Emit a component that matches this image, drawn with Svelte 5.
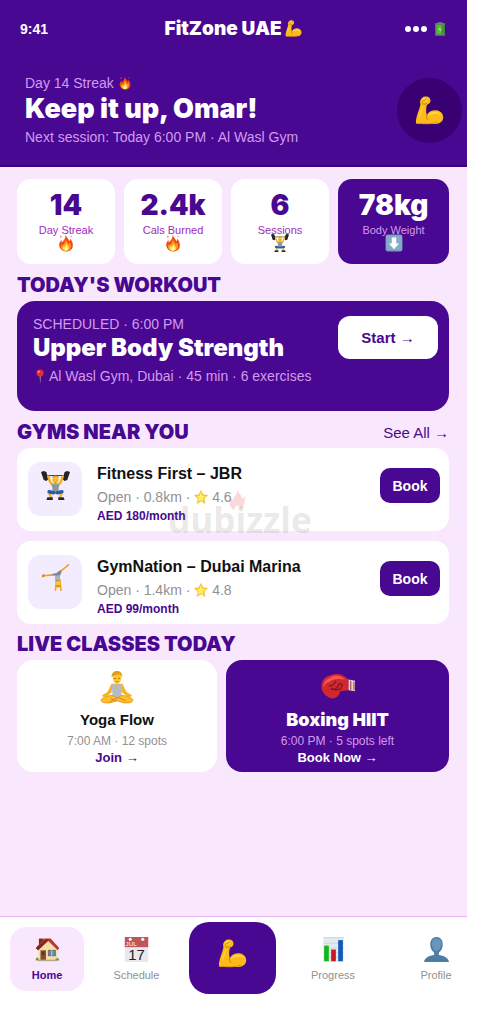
<script lang="ts">
    type Stat = { value: string; label: string; icon: string; dark?: boolean };

    const stats: Stat[] = [
        { value: '14', label: 'Day Streak', icon: 'fire' },
        { value: '2.4k', label: 'Cals Burned', icon: 'fire' },
        { value: '6', label: 'Sessions', icon: 'lifter' },
        { value: '78kg', label: 'Body Weight', icon: 'down', dark: true }
    ];

    const gyms = [
        { name: 'Fitness First – JBR', distance: '0.8km', rating: '4.6', price: 'AED 180/month', icon: 'lifter' },
        { name: 'GymNation – Dubai Marina', distance: '1.4km', rating: '4.8', price: 'AED 99/month', icon: 'cartwheel' }
    ];

    const classes = [
        { name: 'Yoga Flow', info: '7:00 AM · 12 spots', action: 'Join →', icon: 'yoga', dark: false },
        { name: 'Boxing HIIT', info: '6:00 PM · 5 spots left', action: 'Book Now →', icon: 'glove', dark: true }
    ];

    const tabs = [
        { label: 'Home', icon: 'house' },
        { label: 'Schedule', icon: 'calendar' },
        { label: '', icon: 'arm' },
        { label: 'Progress', icon: 'chart' },
        { label: 'Profile', icon: 'person' }
    ];

    let active = $state('Home');
</script>

{#snippet icon(name: string)}
    <svg class="icon" viewBox="0 0 32 32" aria-hidden="true">
        {#if name === 'arm'}
            <path fill="#fcba1b" d="M8 2c2-2 6-2 8 0 1 2 2 4 0 6l-3 2c-1 4-1 8 0 11 3-5 8-6 12-5 4 1 7 5 6 9-1 4-5 6-10 6H3c-2 0-2-2-2-4 1-7 4-12 5-18-1-3 0-5 2-7z" />
            <path fill="#ffd643" d="M9 2c3-1 5 0 5 2s-3 2-5 2-1-3 0-4zM14 22c3-6 12-6 15-1-5-2-10-2-15 1zM8 11c-1 5-3 9-4 14 3-4 4-9 5-14z" />
            <path fill="none" stroke="#c8720a" stroke-width="1" stroke-linecap="round" d="M8 6c2-2 4-1 5-3M13 8c-1 1-3 2-5 0M13 21c-1 2 0 4 1 5" />
            <path fill="none" stroke="#e08a0d" stroke-width="1" d="M3 30c8 1 16 1 22-1" />
        {:else if name === 'fire'}
            <path fill="#f04b13" d="M15 1c1 5 6 7 7 12 1-1 2-3 1-5 4 4 6 9 5 14-1 6-6 9-12 9S5 27 4 21c-1-5 2-8 4-11 0 2 0 4 1 5 3-4 7-7 6-14z" />
            <path fill="#ff9b13" d="M15 8c1 5 5 7 6 11l2-4c3 5 2 10-1 13-4 3-10 3-13-1-3-3-2-7 0-9l1 2c4-3 6-7 5-12z" />
            <path fill="#ffe867" d="M16 16c1 4 5 5 5 9 0 3-2 5-5 5s-6-2-6-5c0-2 1-3 2-4l1 2c2-2 3-4 3-7z" />
            <path fill="#fffbd4" d="M16 23c2 2 3 3 2 5-1 2-4 1-4-1 0-1 1-2 2-4z" />
            <path fill="#f5661a" d="M7 2c1 2 2 3 0 5-2-2-1-3 0-5zM25 2c1 2 1 3 0 4-1-1-1-2 0-4z" />
        {:else if name === 'lifter'}
            <path stroke="#444" stroke-width="1.2" d="M3 5h26" />
            <path fill="#242424" d="M0 1l3-1 3 1 2 8-2 2-3-1zM32 1l-3-1-3 1-2 8 2 2 3-1z" />
            <path fill="none" stroke="#f5ae1c" stroke-width="2.600" stroke-linecap="round" stroke-linejoin="round" d="M8 6l2 6 3 4M24 6l-2 6-3 4" />
            <path fill="none" stroke="#f5ae1c" stroke-width="2.600" d="M9 24l2 5M23 24l-2 5" />
            <path fill="#8f979d" d="M12 14h8l-1 11h-6z" />
            <ellipse cx="16" cy="10" rx="3.500" ry="4.500" fill="#ffc62a" />
            <path fill="#d99b1d" d="M12.500 8c0-4 7-4 7 0-2-2-5-2-7 0z" />
            <path stroke="#875006" stroke-width=".8" d="M14 10h1M17 10h1M15 13h2" />
            <path fill="none" stroke="#285da5" stroke-width="4" stroke-linecap="round" d="M14 24l-5-1M18 24l5-1" />
            <path fill="#292929" d="M7 29h6v3H6zM19 29h6l1 3h-7z" />
        {:else if name === 'down'}
            <rect x="1" y="1" width="30" height="30" rx="4" fill="#7197b9" />
            <rect x="2" y="2" width="28" height="27" rx="3" fill="#86abc8" />
            <path fill="#fff" d="M12 6h8v11h5l-9 10-9-10h5z" />
        {:else if name === 'cartwheel'}
            <path fill="none" stroke="#f0a51c" stroke-width="1.800" stroke-linecap="round" stroke-linejoin="round" d="M2 13l12-1M19 10l10-8M17 18l-1 11M21 18l1 11" />
            <path fill="#7f8993" d="M12 11l5-1 4-3 2 1-2 5v6h-5v-6l-4-1z" />
            <path fill="#aab1b6" d="M16 13l5-1v6h-5z" />
            <ellipse cx="19" cy="22" rx="2.500" ry="3.500" fill="#ffc52b" />
            <path fill="#d08b18" d="M16.500 23c0 4 5 4 5 0-1 1-4 1-5 0z" />
            <path fill="#d98b12" d="M1 12l3-1v3l-3 1zM28 1l3-1v2z" />
        {:else if name === 'yoga'}
            <path fill="#f7b324" d="M11 13c-3 4-2 8-8 10-2 1 0 3 2 2 5-2 7-5 8-8h6c1 4 3 6 8 8 2 1 4-1 2-2-6-2-5-6-8-10z" />
            <ellipse cx="16" cy="7" rx="4" ry="6" fill="#ffc72f" />
            <path fill="#e39d18" d="M11 7c-1-8 11-8 10 0-1-2-2-3-3-3-3 1-5 0-7 3z" />
            <path stroke="#a96914" stroke-width=".8" d="M13 8h2M17 8h2M15 11h2" />
            <path fill="#b6bac2" d="M11 14l3-1 2 1 2-1 3 1-1 12h-8z" />
            <path fill="#ffbf27" stroke="#d98b12" stroke-width=".7" d="M12 24c-5 0-8 1-11 4 0 3 4 3 8 3l7-2 7 2c4 0 8 0 8-3-3-3-6-4-11-4l-3 2h-2z" />
            <path fill="none" stroke="#d18412" stroke-width=".8" d="M9 30l8-4 7 3M10 27l6 2" />
        {:else if name === 'glove'}
            <path fill="#cf2831" d="M9 5c7-3 13 0 17 4v10l-8 1c-1 6-7 9-12 5-4-3-7-7-5-13 1-4 4-6 8-7z" />
            <path fill="#f35752" d="M9 7c6-3 10-1 14 2-7-1-11-1-15 2-4 1-5 3-5 6-2-4 1-8 6-10z" />
            <path fill="none" stroke="#841721" stroke-width="1.200" d="M14 10c-1 4-3 5-7 5M9 18c4 1 7-1 8-5 4-1 3 3 1 5-3 1-6 1-8-1" />
            <path fill="#e9d7d7" d="M26 9l6 1v10l-6-1z" />
            <path stroke="#9a3a40" stroke-width="1" d="M28 10v9M31 11v8" />
        {:else if name === 'pin'}
            <path fill="#989fa5" d="M15 14h3l-1 17h-1z" />
            <circle cx="16" cy="9" r="8" fill="#e62e2e" />
            <ellipse cx="13" cy="6" rx="3" ry="2" fill="#ff8d7c" />
        {:else if name === 'star'}
            <path fill="#ffc52b" stroke="#eda71e" d="M16 1l5 10 10 1-8 8 2 11-9-6-9 6 2-11-8-8 10-1z" />
            <path fill="#fff06c" d="M16 4l3 9 8 1-7 5 1 8-5-4-8 4 3-9-5-4 7-1z" />
        {:else if name === 'battery'}
            <rect x="11" y="1" width="10" height="4" fill="#8fa38f" />
            <rect x="5" y="3" width="22" height="28" rx="2" fill="#3b9b31" />
            <path fill="#58b63e" d="M8 6h11v22H8z" />
            <path fill="#a5df8e" d="M17 9l-5 9h4l-1 7 5-10h-4z" />
            <path fill="#6b7d6e" d="M5 3h22v3H5zM5 28h22v3H5z" />
        {:else if name === 'house'}
            <path fill="#783023" d="M5 2h6v10H5z" />
            <path fill="#f4dfac" d="M4 14L17 3l12 12v15H4z" />
            <path fill="#b33b31" d="M1 14L12 2h8l11 12-2 3L17 5 4 17z" />
            <path fill="#802820" d="M1 14L14 3h4L4 17z" />
            <rect x="7" y="17" width="7" height="13" fill="#8b4b2b" />
            <rect x="9" y="19" width="3" height="4" fill="#493a35" />
            <rect x="17" y="17" width="9" height="7" fill="#4b91bd" stroke="#865a3c" />
            <path stroke="#d9eff5" d="M21.500 17v7" />
            <path fill="#6f9c38" d="M1 28c1-3 4-2 4 2H1zM26 30c0-4 5-4 5 0z" />
            <path fill="#b7aa91" d="M4 29h25v2H4z" />
        {:else if name === 'calendar'}
            <path fill="#e7e9ea" d="M1 0h30v32H1z" />
            <path fill="#c0565a" d="M1 0h30v13H1z" />
            <circle cx="8" cy="3" r="2" fill="#fff" />
            <circle cx="24" cy="3" r="2" fill="#fff" />
            <text x="2" y="11" font-family="Liberation Sans, sans-serif" font-size="8" fill="#fff">JUL</text>
            <text x="16" y="29" text-anchor="middle" font-family="Liberation Sans, sans-serif" font-size="19" fill="#222">17</text>
        {:else if name === 'chart'}
            <path fill="#e0ebf0" d="M3 0h26v32H3z" />
            <path stroke="#c1d3dc" d="M3 1h26M3 8h26M3 14h26M3 20h26M3 26h26" />
            <path fill="#17b41b" d="M4 11h6v20H4z" />
            <path fill="#cc171c" d="M13 16h6v15h-6z" />
            <path fill="#1558bc" d="M22 4h6v27h-6z" />
        {:else if name === 'person'}
            <path fill="#4d7ca5" d="M16 0c6 0 8 5 8 10 0 4-2 8-5 10v3c6 1 12 3 13 9H0c1-6 7-8 13-9v-3c-3-2-5-6-5-10 0-5 2-10 8-10z" />
            <path fill="#6997bb" d="M16 2c4 0 7 3 6 8s-3 8-6 8-5-3-6-8 2-8 6-8z" />
        {/if}
    </svg>
{/snippet}

<div class="app">
    <header>
        <div class="status">
            <span class="time">9:41</span>
            <span class="brand">FitZone UAE {@render icon('arm')}</span>
            <span class="signal"><i></i><i></i><i></i>{@render icon('battery')}</span>
        </div>
        <div class="hero">
            <div>
                <p class="soft">Day 14 Streak {@render icon('fire')}</p>
                <h1>Keep it up, Omar!</h1>
                <p class="soft">Next session: Today 6:00 PM · Al Wasl Gym</p>
            </div>
            <div class="avatar">{@render icon('arm')}</div>
        </div>
    </header>

    <main>
        <section class="stats">
            {#each stats as stat}
                <div class="stat" class:dark={stat.dark}>
                    <strong>{stat.value}</strong>
                    <span>{stat.label}</span>
                    {@render icon(stat.icon)}
                </div>
            {/each}
        </section>

        <h2>TODAY'S WORKOUT</h2>
        <section class="workout">
            <div>
                <p class="soft">SCHEDULED · 6:00 PM</p>
                <h3>Upper Body Strength</h3>
                <p class="soft place">{@render icon('pin')}Al Wasl Gym, Dubai · 45 min · 6 exercises</p>
            </div>
            <button class="start">Start →</button>
        </section>

        <div class="section-head">
            <h2>GYMS NEAR YOU</h2>
            <a href="#gyms">See All →</a>
        </div>
        <section class="gyms" id="gyms">
            {#each gyms as gym}
                <article class="gym">
                    <div class="thumb">{@render icon(gym.icon)}</div>
                    <div class="details">
                        <h4>{gym.name}</h4>
                        <p>Open · {gym.distance} · {@render icon('star')} {gym.rating}</p>
                        <b>{gym.price}</b>
                    </div>
                    <button class="book">Book</button>
                </article>
            {/each}
            <div class="watermark">
                dubizzle
                <svg viewBox="0 0 16 22" aria-hidden="true">
                    <path d="M8 0c1 5 6 6 5 10l3-3c0 7-1 11-5 14 1-6-5-6-6 0C0 19-1 13 2 9l2 3C4 7 9 6 8 0z" />
                </svg>
            </div>
        </section>

        <h2>LIVE CLASSES TODAY</h2>
        <section class="classes">
            {#each classes as item}
                <article class="class-card" class:dark={item.dark}>
                    {@render icon(item.icon)}
                    <h4>{item.name}</h4>
                    <p>{item.info}</p>
                    <a href="#book">{item.action}</a>
                </article>
            {/each}
        </section>
    </main>

    <nav>
        {#each tabs as tab}
            {#if tab.label}
                <button class="tab" class:active={active === tab.label} onclick={() => (active = tab.label)}>
                    {@render icon(tab.icon)}
                    <span>{tab.label}</span>
                </button>
            {:else}
                <button class="fab" aria-label="Workout">{@render icon(tab.icon)}</button>
            {/if}
        {/each}
    </nav>
</div>

<style>
    :global(body) {
        margin: 0;
        background: #fff;
    }

    .app {
        --purple: #480891;
        --soft: #d39af0;
        --black: 900 20px/24px "Arial Black", Inter, "Liberation Sans", sans-serif;
        display: flex;
        flex-direction: column;
        min-height: 100vh;
        margin-right: 12px;
        background: #f9e8fd;
        font-family: "Liberation Sans", Arial, sans-serif;
        color: #111;
    }

    h1, h2, h3, h4, p {
        margin: 0;
    }

    button {
        border: 0;
        padding: 0;
        font-family: inherit;
        cursor: pointer;
    }

    a {
        color: var(--purple);
        text-decoration: none;
    }

    .icon {
        width: 14px;
        height: 14px;
        vertical-align: -2px;
        flex: none;
    }

    header {
        box-sizing: border-box;
        height: 167px;
        padding-top: 16px;
        background: var(--purple);
        border-bottom: 2px solid #38007a;
        color: #fff;
    }

    .status {
        display: grid;
        grid-template-columns: 1fr auto 1fr;
        align-items: center;
        padding: 0 20px;
        height: 26px;
    }

    .time {
        font-size: 14px;
        font-weight: bold;
    }

    .brand {
        font: var(--black);
        font-size: 19px;
    }

    .brand .icon {
        width: 17px;
        height: 17px;
    }

    .signal {
        display: flex;
        align-items: center;
        justify-content: flex-end;
        gap: 2px;
    }

    .signal i {
        width: 6px;
        height: 6px;
        border-radius: 50%;
        background: #fff;
    }

    .signal .icon {
        margin-left: 4px;
    }

    .hero {
        display: flex;
        justify-content: space-between;
        padding: 32px 5px 0 25px;
    }

    .soft {
        color: var(--soft);
        font-size: 14px;
        line-height: 18px;
    }

    h1 {
        padding-bottom: 2px;
        font: var(--black);
        font-size: 27px;
        line-height: 34px;
    }

    .avatar {
        display: grid;
        place-items: center;
        width: 65px;
        height: 65px;
        margin-top: 4px;
        border-radius: 50%;
        background: #390073;
    }

    .avatar .icon {
        width: 29px;
        height: 29px;
    }

    main {
        flex: 1;
        padding: 12px 18px 0 17px;
    }

    .stats {
        display: grid;
        grid-template-columns: 98fr 98fr 98fr 111fr;
        gap: 9px;
        margin-bottom: 9px;
    }

    .stat {
        display: flex;
        flex-direction: column;
        align-items: center;
        box-sizing: border-box;
        height: 85px;
        padding-top: 8px;
        border-radius: 14px;
        background: #fff;
        color: var(--purple);
    }

    .stat strong {
        font: var(--black);
        font-size: 28px;
        line-height: 36px;
    }

    .stat span {
        color: #a02abf;
        font-size: 11px;
        line-height: 14px;
    }

    .stat .icon {
        width: 18px;
        height: 18px;
        margin-top: -3px;
    }

    .dark.stat, .dark.class-card {
        background: var(--purple);
        color: #fff;
    }

    .dark.stat span, .dark.class-card p {
        color: var(--soft);
    }

    h2 {
        color: var(--purple);
        font: var(--black);
    }

    .workout {
        display: flex;
        justify-content: space-between;
        align-items: flex-start;
        box-sizing: border-box;
        height: 110px;
        margin: 4px 0 9px;
        padding: 15px 11px 0 16px;
        border-radius: 18px;
        background: var(--purple);
        color: #fff;
    }

    h3 {
        padding-bottom: 4px;
        font: var(--black);
        font-size: 24px;
        line-height: 30px;
    }

    .workout div {
        margin-top: -1px;
        white-space: nowrap;
    }

    .place .icon {
        margin-right: 2px;
    }

    .start {
        width: 100px;
        height: 43px;
        border-radius: 12px;
        background: #fff;
        color: var(--purple);
        font-size: 15px;
        font-weight: bold;
    }

    .section-head {
        display: flex;
        align-items: center;
        justify-content: space-between;
    }

    .section-head a {
        font-size: 15px;
    }

    .gyms {
        position: relative;
        display: grid;
        gap: 10px;
        margin: 4px 0 8px;
    }

    .gym {
        display: flex;
        box-sizing: border-box;
        height: 83px;
        padding: 14px 9px 0 11px;
        border-radius: 14px;
        background: #fff;
    }

    .thumb {
        display: grid;
        place-items: center;
        width: 54px;
        height: 54px;
        border-radius: 13px;
        background: #f3ebfe;
    }

    .thumb .icon {
        width: 29px;
        height: 29px;
        margin-bottom: 7px;
    }

    .details {
        flex: 1;
        margin-left: 15px;
    }

    .details h4 {
        font-size: 16px;
        line-height: 24px;
    }

    .details p {
        color: #919191;
        font-size: 14px;
        line-height: 22px;
    }

    .details b {
        display: block;
        color: var(--purple);
        font-size: 12px;
        line-height: 16px;
    }

    .book {
        width: 60px;
        height: 35px;
        margin-top: 6px;
        border-radius: 10px;
        background: var(--purple);
        color: #fff;
        font-size: 14px;
        font-weight: bold;
    }

    .watermark {
        position: absolute;
        top: 48px;
        left: 35%;
        color: rgba(90, 90, 90, 0.15);
        font: bold 35px/48px "Open Sans", sans-serif;
        pointer-events: none;
    }

    .watermark svg {
        position: absolute;
        top: -7px;
        left: 61px;
        width: 16px;
        height: 22px;
        fill: rgba(225, 70, 70, 0.2);
    }

    .classes {
        display: grid;
        grid-template-columns: 200fr 223fr;
        gap: 9px;
        margin-top: 4px;
    }

    .class-card {
        display: flex;
        flex-direction: column;
        align-items: center;
        box-sizing: border-box;
        height: 112px;
        padding-top: 10px;
        border-radius: 16px;
        background: #fff;
    }

    .class-card .icon {
        width: 34px;
        height: 34px;
    }

    .class-card h4 {
        margin-top: 4px;
        font-size: 15px;
        line-height: 24px;
    }

    .dark.class-card h4 {
        font: var(--black);
        font-size: 18px;
    }

    .class-card p {
        color: #919191;
        font-size: 12px;
        line-height: 18px;
    }

    .class-card a {
        font-size: 13px;
        font-weight: bold;
        line-height: 16px;
    }

    .dark.class-card a {
        color: #fff;
    }

    nav {
        display: grid;
        grid-template-columns: 74fr 105fr 87fr 114fr 77fr;
        align-items: start;
        box-sizing: border-box;
        height: 108px;
        padding: 5px 0 0 10px;
        border-top: 1px solid #e9b5f3;
        background: #fff;
    }

    .tab {
        display: flex;
        flex-direction: column;
        align-items: center;
        gap: 5px;
        height: 64px;
        margin-top: 5px;
        padding-top: 10px;
        border-radius: 16px;
        background: none;
        color: #919191;
        font-size: 11px;
        line-height: 16px;
    }

    .tab:last-child {
        padding-left: 15px;
    }

    .tab.active {
        background: #f9e8fd;
        color: var(--purple);
        font-weight: bold;
    }

    .tab .icon {
        width: 25px;
        height: 25px;
    }

    .fab {
        height: 72px;
        border-radius: 20px;
        background: var(--purple);
    }

    .fab .icon {
        width: 29px;
        height: 29px;
        margin-bottom: 8px;
    }
</style>
